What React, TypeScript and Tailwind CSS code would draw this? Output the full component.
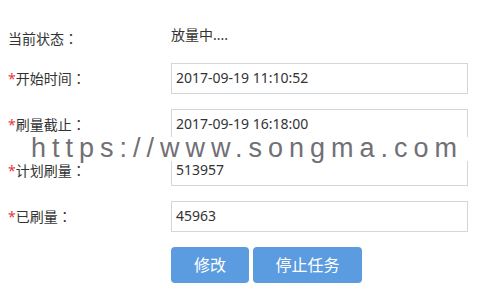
import React from "react";

const rows = [
  { label: "开始时间", value: "2017-09-19 11:10:52" },
  { label: "刷量截止", value: "2017-09-19 16:18:00" },
  { label: "计划刷量", value: "513957" },
  { label: "已刷量", value: "45963" },
];

function Colon() {
  return (
    <span style={{ fontFamily: '"Noto Sans CJK TC", "Noto Sans CJK SC", sans-serif' }}>：</span>
  );
}

export default function App() {
  return (
    <div
      className="relative w-[479px] h-[298px] bg-white text-[14px] text-[#333] overflow-hidden"
      style={{ fontFamily: '"Noto Sans", "Noto Sans CJK SC", sans-serif' }}
    >
      <div className="pt-[20px] pl-[8px]">
        <div className="flex h-[30px] items-center mb-[13px]">
          <div className="w-[163px] pt-[6px] leading-none">
            当前状态<Colon />
          </div>
          <div className="leading-none">放量中....</div>
        </div>
        {rows.map((r) => (
          <div key={r.label} className="flex h-[30px] items-center mb-[16px]">
            <div className="w-[163px] leading-none">
              <span className="text-[#e4393c]">*</span>
              {r.label}
              <Colon />
            </div>
            <div className="w-[297px] h-[31px] border border-[#d0d7de] flex items-center pl-[4px] leading-none">
              {r.value}
            </div>
          </div>
        ))}
        <div className="flex gap-[4px] pl-[163px]">
          <button className="w-[78px] h-[36px] rounded-[4px] bg-[#5b9be0] text-white text-[16px] leading-none">
            修改
          </button>
          <button className="w-[109px] h-[36px] rounded-[4px] bg-[#5b9be0] text-white text-[16px] leading-none">
            停止任务
          </button>
        </div>
      </div>
      <div className="absolute left-0 top-[137px] w-full h-[24px] bg-white overflow-visible">
        <div
          className="absolute left-[31px] top-[-2px] text-[27px] tracking-[6px] text-[#707076] leading-none whitespace-nowrap"
          style={{ fontFamily: '"Liberation Sans", Arial, sans-serif' }}
        >
          https://www.songma.com
        </div>
      </div>
    </div>
  );
}
